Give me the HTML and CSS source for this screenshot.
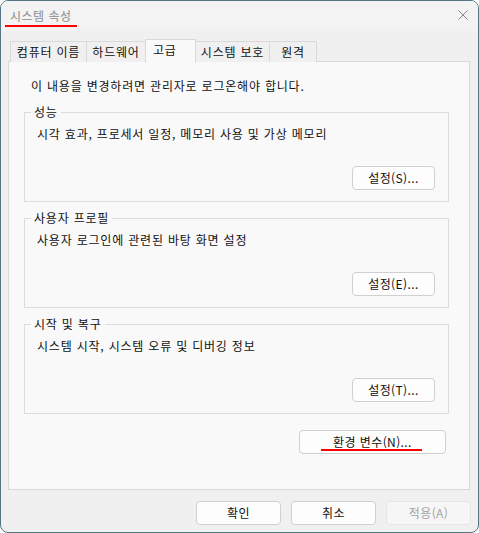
FILE: index.html
```html
<!DOCTYPE html>
<html lang="ko">
<head>
<meta charset="utf-8">
<title>시스템 속성</title>
<link rel="stylesheet" href="styles.css">
</head>
<body>
<div class="window">
  <div class="titlebar">
    <span class="title">시스템 속성</span>
    <svg class="close" width="10" height="10" viewBox="0 0 10 10"><path d="M0.5 0.5 L9.5 9.5 M9.5 0.5 L0.5 9.5" stroke="#8a8a8a" stroke-width="1" fill="none"/></svg>
  </div>
  <div class="body">
    <div class="tabs">
      <div class="tab t1">컴퓨터 이름</div>
      <div class="tab t2">하드웨어</div>
      <div class="tab t3 active">고급</div>
      <div class="tab t4">시스템 보호</div>
      <div class="tab t5">원격</div>
    </div>
    <div class="panel">
      <p class="intro">이 내용을 변경하려면 관리자로 로그온해야 합니다.</p>
      <div class="group">
        <span class="legend">성능</span>
        <p class="desc">시각 효과, 프로세서 일정, 메모리 사용 및 가상 메모리</p>
        <button class="btn set">설정(S)...</button>
      </div>
      <div class="group">
        <span class="legend">사용자 프로필</span>
        <p class="desc">사용자 로그인에 관련된 바탕 화면 설정</p>
        <button class="btn set">설정(E)...</button>
      </div>
      <div class="group">
        <span class="legend">시작 및 복구</span>
        <p class="desc">시스템 시작, 시스템 오류 및 디버깅 정보</p>
        <button class="btn set">설정(T)...</button>
      </div>
      <div class="env-row">
        <button class="btn env"><span class="mark">환경 변수(N)...</span></button>
      </div>
    </div>
    <div class="footer">
      <button class="btn foot">확인</button>
      <button class="btn foot">취소</button>
      <button class="btn foot disabled">적용(A)</button>
    </div>
  </div>
</div>
</body>
</html>
```

FILE: styles.css
```css
* { box-sizing: border-box; }
html, body {
  margin: 0;
  padding: 0;
  background: #ffffff;
}
body {
  font-family: "Noto Sans CJK KR", "Noto Sans", sans-serif;
  font-size: 12px;
  line-height: 16px;
  letter-spacing: 0.8px;
  color: #1a1a1a;
}
.window {
  width: 479px;
  height: 533px;
  border: 1px solid #557585;
  border-radius: 8px;
  background: #f0f0f0;
  overflow: hidden;
  display: flex;
  flex-direction: column;
}
.titlebar {
  height: 30px;
  background: #f3f3f3;
  display: flex;
  align-items: flex-start;
  justify-content: space-between;
  padding-top: 7px;
}
.title {
  display: inline-block;
  margin-left: 4px;
  padding: 0 5px 1px;
  border-bottom: 2px solid #ff0000;
  color: #8c8c8c;
  line-height: 16px;
  letter-spacing: 0.5px;
}
.close {
  margin-top: 2px;
  margin-right: 10px;
}
.body {
  flex: 1;
  display: flex;
  flex-direction: column;
  padding: 0 0 0 7px;
}
.tabs {
  display: flex;
  align-items: flex-end;
  height: 31px;
  padding-left: 2px;
  padding-top: 9px;
  position: relative;
  z-index: 1;
}
.tab {
  height: 21px;
  border: 1px solid #d9d9d9;
  border-bottom: none;
  background: #f0f0f0;
  color: #111;
  text-align: center;
  line-height: 19px;
  margin-left: -1px;
  white-space: nowrap;
}
.tab.t1 { width: 77px; margin-left: 0; }
.tab.t2 { width: 60px; }
.tab.t3 { width: 51px; }
.tab.t4 { width: 75px; }
.tab.t5 { width: 48px; }
.tab.active {
  height: 24px;
  background: #f9f9f9;
  margin-bottom: -1px;
  line-height: 20px;
  text-align: left;
  padding-left: 7px;
}
.panel {
  width: 462px;
  height: 429px;
  margin-top: -1px;
  border: 1px solid #d9d9d9;
  background: #f9f9f9;
  padding: 16px 0 0 15px;
}
.intro {
  margin: 0 0 18px 7px;
  color: #111;
}
.group {
  position: relative;
  width: 425px;
  height: 90px;
  border: 1px solid #dcdcdc;
  margin-bottom: 16px;
  padding: 13px 13px 11px 12px;
  display: flex;
  flex-direction: column;
}
.legend {
  position: absolute;
  top: -9px;
  left: 6px;
  padding: 0 3px;
  background: #f9f9f9;
  color: #111;
  line-height: 16px;
}
.desc {
  margin: 0;
  color: #111;
}
.btn {
  font-family: "Noto Sans CJK KR", "Noto Sans", sans-serif;
  font-size: 12px;
  line-height: 16px;
  letter-spacing: 0.4px;
  color: #111;
  background: #fdfdfd;
  border: 1px solid #d0d0d0;
  border-radius: 4px;
  height: 24px;
  padding: 0;
}
.btn.set {
  width: 83px;
  margin-top: auto;
  align-self: flex-end;
}
.env-row {
  display: flex;
  justify-content: flex-end;
  width: 422px;
}
.btn.env {
  width: 147px;
}
.mark {
  position: relative;
  display: inline-block;
}
.mark::after {
  content: "";
  position: absolute;
  left: -12px;
  right: -10px;
  bottom: -1px;
  height: 2px;
  background: #ff0000;
}
.footer {
  display: flex;
  justify-content: flex-end;
  gap: 10px;
  padding: 11px 7px 0 0;
}
.btn.foot {
  width: 85px;
}
.btn.disabled {
  background: #f6f6f6;
  border-color: #e6e6e6;
  color: #a3a3a3;
}
```
